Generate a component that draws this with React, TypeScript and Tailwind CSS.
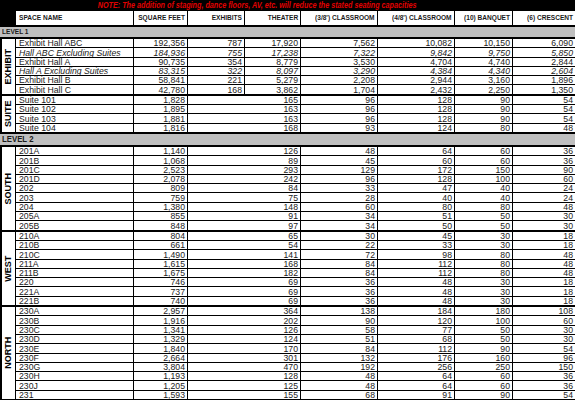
import React from 'react';

type Row = {
  name: string;
  sq: string;
  ex?: string;
  th: string;
  c3: string;
  c4: string;
  bq: string;
  cr: string;
  italic?: boolean;
};

const GRID = 'grid grid-cols-[117px_53px_56px_55px_76px_76px_57px_1fr] gap-x-px';
const BODY = "font-['Liberation_Sans',Arial,sans-serif]";

const HEADERS = ['SQUARE FEET', 'EXHIBITS', 'THEATER', "(3/8') CLASSROOM", "(4/8') CLASSROOM", '(10) BANQUET', '(6) CRESCENT'];

const exhibit: Row[] = [
  { name: 'Exhibit Hall ABC', sq: '192,356', ex: '787', th: '17,920', c3: '7,562', c4: '10,082', bq: '10,150', cr: '6,090' },
  { name: 'Hall ABC Excluding Suites', sq: '184,936', ex: '755', th: '17,238', c3: '7,322', c4: '9,842', bq: '9,750', cr: '5,850', italic: true },
  { name: 'Exhibit Hall A', sq: '90,735', ex: '354', th: '8,779', c3: '3,530', c4: '4,704', bq: '4,740', cr: '2,844' },
  { name: 'Hall A Excluding Suites', sq: '83,315', ex: '322', th: '8,097', c3: '3,290', c4: '4,384', bq: '4,340', cr: '2,604', italic: true },
  { name: 'Exhibit Hall B', sq: '58,841', ex: '221', th: '5,279', c3: '2,208', c4: '2,944', bq: '3,160', cr: '1,896' },
  { name: 'Exhibit Hall C', sq: '42,780', ex: '168', th: '3,862', c3: '1,704', c4: '2,432', bq: '2,250', cr: '1,350' },
];

// rooms without exhibit space: [name, sqft, theater, 3/8, 4/8, banquet, crescent]
const r = (a: string[]): Row => ({ name: a[0], sq: a[1], th: a[2], c3: a[3], c4: a[4], bq: a[5], cr: a[6] });

const suite = [
  ['Suite 101', '1,828', '165', '96', '128', '90', '54'],
  ['Suite 102', '1,895', '163', '96', '128', '90', '54'],
  ['Suite 103', '1,881', '163', '96', '128', '90', '54'],
  ['Suite 104', '1,816', '168', '93', '124', '80', '48'],
].map(r);

const south = [
  ['201A', '1,140', '126', '48', '64', '60', '36'],
  ['201B', '1,068', '89', '45', '60', '60', '36'],
  ['201C', '2,523', '293', '129', '172', '150', '90'],
  ['201D', '2,078', '242', '96', '128', '100', '60'],
  ['202', '809', '84', '33', '47', '40', '24'],
  ['203', '759', '75', '28', '40', '40', '24'],
  ['204', '1,380', '148', '60', '80', '80', '48'],
  ['205A', '855', '91', '34', '51', '50', '30'],
  ['205B', '848', '97', '34', '50', '50', '30'],
].map(r);

const west = [
  ['210A', '804', '65', '30', '45', '30', '18'],
  ['210B', '661', '54', '22', '33', '30', '18'],
  ['210C', '1,490', '141', '72', '98', '80', '48'],
  ['211A', '1,615', '168', '84', '112', '80', '48'],
  ['211B', '1,675', '182', '84', '112', '80', '48'],
  ['220', '746', '69', '36', '48', '30', '18'],
  ['221A', '737', '69', '36', '48', '30', '18'],
  ['221B', '740', '69', '36', '48', '30', '18'],
].map(r);

const north = [
  ['230A', '2,957', '364', '138', '184', '180', '108'],
  ['230B', '1,916', '202', '90', '120', '100', '60'],
  ['230C', '1,341', '126', '58', '77', '50', '30'],
  ['230D', '1,329', '124', '51', '68', '50', '30'],
  ['230E', '1,840', '170', '84', '112', '90', '54'],
  ['230F', '2,664', '301', '132', '176', '160', '96'],
  ['230G', '3,804', '470', '192', '256', '250', '150'],
  ['230H', '1,193', '128', '48', '64', '60', '36'],
  ['230J', '1,205', '125', '48', '64', '60', '36'],
  ['231', '1,593', '155', '68', '91', '90', '54'],
].map(r);

const num = 'bg-white text-right pr-[2px] flex items-end justify-end';

function DataRow({ row, h }: { row: Row; h: string }) {
  return (
    <div className={`${GRID} ${h} ${row.italic ? 'italic' : ''} text-[8.7px] leading-[8px] text-[#222]`}>
      <div className="bg-white pl-[3px] flex items-end whitespace-nowrap overflow-hidden">{row.name}</div>
      <div className={num}>{row.sq}</div>
      {row.ex ? (
        <>
          <div className={num}>{row.ex}</div>
          <div className={num}>{row.th}</div>
        </>
      ) : (
        <div className={`${num} col-span-2`}>{row.th}</div>
      )}
      <div className={num}>{row.c3}</div>
      <div className={num}>{row.c4}</div>
      <div className={num}>{row.bq}</div>
      <div className={num}>{row.cr}</div>
    </div>
  );
}

function Group({ label, rows, h }: { label: string; rows: Row[]; h: string }) {
  return (
    <div className="flex gap-x-px">
      <div className="w-[15px] pl-[2px] flex shrink-0">
        <div className="flex-1 bg-white flex items-center justify-center overflow-hidden">
          <span className="-rotate-90 whitespace-nowrap text-[9px] font-bold text-black">{label}</span>
        </div>
      </div>
      <div className="flex-1 flex flex-col gap-y-px">
        {rows.map((row) => (
          <DataRow key={row.name} row={row} h={h} />
        ))}
      </div>
    </div>
  );
}

export default function App() {
  return (
    <div className={`w-[575px] h-[400px] overflow-hidden bg-black ${BODY}`}>
      {/* note */}
      <div className="h-[11px] pr-[60px] flex items-center justify-center">
        <span className="inline-block scale-x-[0.8] text-[9px] font-bold italic text-[#e00000] whitespace-nowrap">
          NOTE: The addition of staging, dance floors, AV, etc. will reduce the stated seating capacities
        </span>
      </div>

      {/* header */}
      <div className="flex gap-x-px">
        <div className="w-[15px] shrink-0" />
        <div className={`${GRID} flex-1 h-[14px] text-[8px] font-bold text-[#1a1a1a]`}>
          <div className="bg-white pl-[3px] flex items-center">
            <span className="inline-block scale-x-[0.82] origin-left whitespace-nowrap">SPACE NAME</span>
          </div>
          {HEADERS.map((h) => (
            <div key={h} className="bg-white pr-[2px] flex items-center justify-end">
              <span className="inline-block scale-x-[0.82] origin-right whitespace-nowrap">{h}</span>
            </div>
          ))}
        </div>
      </div>

      {/* level 1 */}
      <div className="mt-[2px] h-[10px] bg-[#bfbfbf] pl-[2px] flex items-center text-[8px] font-bold text-[#1a1a1a]">
        <span className="inline-block scale-x-[0.82] origin-left">LEVEL 1</span>
      </div>
      <div className="mt-[2px]">
        <Group label="EXHIBIT" rows={exhibit} h="h-[8.3px]" />
      </div>
      <div className="mt-[2px]">
        <Group label="SUITE" rows={suite} h="h-[8.3px]" />
      </div>

      {/* level 2 */}
      <div className="mt-[2px] h-[11px] bg-[#bfbfbf] pl-[2px] flex items-center text-[9.5px] font-bold text-[#1a1a1a]">
        <span className="inline-block scale-x-[0.82] origin-left">LEVEL 2</span>
      </div>
      <div className="mt-[2px]">
        <Group label="SOUTH" rows={south} h="h-[8.3px]" />
      </div>
      <div className="mt-[2px]">
        <Group label="WEST" rows={west} h="h-[8.3px]" />
      </div>
      <div className="mt-[2px]">
        <Group label="NORTH" rows={north} h="h-[8.3px]" />
      </div>
    </div>
  );
}
